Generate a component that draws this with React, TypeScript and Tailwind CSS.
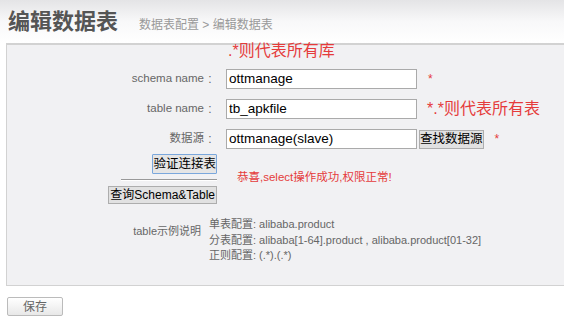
import React from 'react';

const font = { fontFamily: '"Liberation Sans", "Noto Sans CJK SC", sans-serif' };

const Row: React.FC<{ label: string; value: string; children?: React.ReactNode }> = ({ label, value, children }) => (
  <div className="flex items-center h-[20px]">
    <div className="w-[197px] text-right text-[11.5px] text-[#666]">{label}</div>
    <span className="w-[12px] text-center text-[12px] text-[#666]">:</span>
    <input
      readOnly
      value={value}
      className="ml-[10px] w-[191px] h-[20px] bg-white border border-[#aaa] px-[2px] text-[13.5px] text-black outline-none"
    />
    {children}
  </div>
);

export default function App() {
  return (
    <div className="w-[564px] h-[330px] bg-white overflow-hidden" style={font}>
      <div className="h-[43px] bg-gradient-to-b from-[#e4e4e6] via-[#f8f8f9] to-white flex items-end pl-[8px] pb-[8px]">
        <h1 className="text-[22px] leading-[26px] font-bold text-[#555]">编辑数据表</h1>
        <span className="ml-[21px] text-[12px] text-[#999] mb-[1px]">数据表配置 &gt; 编辑数据表</span>
      </div>
      <div className="ml-[6px] h-[243px] bg-[#f1f1f3] border-t-2 border-l border-b border-[#d2d2d2]">
        <div className="pl-[221px] h-[22px] text-[16px] leading-[16px] text-[#e53b3b] -mt-[2px]">.*则代表所有库</div>
        <div className="mt-[4px] flex flex-col gap-[10px]">
          <Row label="schema name" value="ottmanage">
            <span className="ml-[11px] text-[12px] text-[#e53b3b]">*</span>
          </Row>
          <Row label="table name" value="tb_apkfile">
            <span className="ml-[10px] text-[16px] text-[#e53b3b]">*.*则代表所有表</span>
          </Row>
          <Row label="数据源" value="ottmanage(slave)">
            <button className="ml-[2px] h-[19px] px-0 bg-[#e1e1e1] border border-[#adadad] text-[12.5px] text-black leading-[17px]">查找数据源</button>
            <span className="ml-[11px] text-[12px] text-[#e53b3b]">*</span>
          </Row>
        </div>
        <div className="flex mt-[5px]">
          <div className="w-[210px] flex flex-col items-end">
            <button className="h-[20px] px-0 bg-[#e5e5e5] border border-[#7aa7dc] text-[12.5px] text-black leading-[18px] rounded-[1px]">验证连接表</button>
            <div className="mt-[5px] w-[96px] h-[2px] bg-[#999] border-b border-white" />
            <button className="mt-[5px] h-[18px] px-[1px] bg-[#e1e1e1] border border-[#adadad] text-[12px] text-black leading-[16px]">查询Schema&amp;Table</button>
          </div>
          <div className="ml-[20px] pt-[15px] text-[11.5px] text-[#e53b3b]">恭喜,select操作成功,权限正常!</div>
        </div>
        <div className="flex mt-[13px] text-[11px] text-[#666] leading-[15.5px]">
          <div className="w-[194px] text-right pt-[7px]">table示例说明</div>
          <div className="ml-[8px]">
            <div>单表配置: alibaba.product</div>
            <div>分表配置: alibaba[1-64].product , alibaba.product[01-32]</div>
            <div>正则配置: (.*).(.*)</div>
          </div>
        </div>
      </div>
      <div className="pl-[7px] pt-[8px]">
        <button className="w-[56px] h-[19px] bg-gradient-to-b from-white to-[#e8e8e8] border border-[#bbb] rounded-[2px] text-[12px] text-[#666]">保存</button>
      </div>
    </div>
  );
}
